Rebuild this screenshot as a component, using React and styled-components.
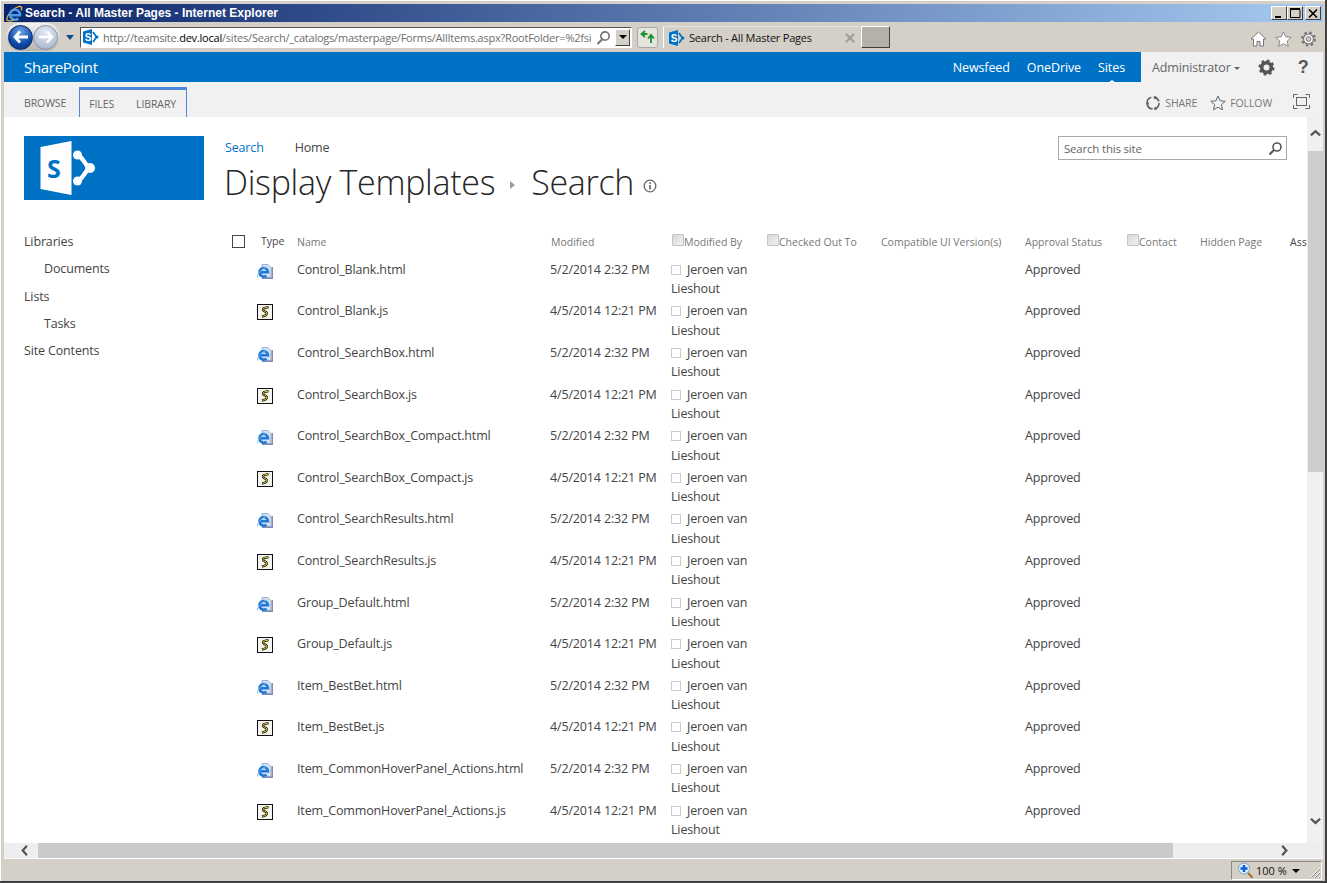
import React from "react";
import styled, { createGlobalStyle } from "styled-components";

const GlobalStyle = createGlobalStyle`
  html, body {
    margin: 0;
    padding: 0;
    width: 1327px;
    height: 883px;
    overflow: hidden;
    background: #d4d0c8;
  }
  * { box-sizing: border-box; }
`;

const UI_FONT = `"Open Sans", "Noto Sans", sans-serif`;

const names = [
  "Control_Blank",
  "Control_SearchBox",
  "Control_SearchBox_Compact",
  "Control_SearchResults",
  "Group_Default",
  "Item_BestBet",
  "Item_CommonHoverPanel_Actions",
];

const rows = names.flatMap((n) => [
  { name: n + ".html", html: true, date: "5/2/2014 2:32 PM" },
  { name: n + ".js", html: false, date: "4/5/2014 12:21 PM" },
]);

function IeLogo() {
  return (
    <svg width="17" height="17" viewBox="0 0 17 17">
      <path d="M1.500 16C-1 12.500 6 3.500 13 1.500c2.500-.6 3.500 1 2 4" fill="none" stroke="#e8b83c" strokeWidth="1.300" />
      <path d="M4.500 10.200H14A5 5 0 1 0 12.300 13.500" fill="none" stroke="#4a9cea" strokeWidth="2.500" />
      <path d="M2 15.500c1.500.8 4 .3 6-.5" fill="none" stroke="#e8b83c" strokeWidth="1.200" />
    </svg>
  );
}

function HtmlIcon() {
  return (
    <svg width="16" height="16" viewBox="0 0 16 16">
      <path d="M5 1.500h6l3 3v10H5z" fill="#d6e2f2" stroke="#9fb2d4" />
      <rect x="14.500" y="4" width="1.500" height="12" fill="#7d8cb0" />
      <rect x="5" y="14.500" width="11" height="1.500" fill="#7d8cb0" />
      <path d="M2.800 9.200H11A4.300 4.300 0 1 0 9.500 12.600" fill="none" stroke="#1f78d8" strokeWidth="2.500" />
      <path d="M.7 14.500C-.5 11.500 5 5.500 10 4" fill="none" stroke="#7cbcf2" />
    </svg>
  );
}

function ScriptIcon() {
  return (
    <svg width="16" height="16" viewBox="0 0 16 16">
      <rect x=".5" y=".5" width="15" height="15" fill="#f4f4f0" stroke="#111" />
      <path d="M11.500 3.200 7 4C5.200 4.700 6 6.500 7.500 7.200l1.500.8C10.500 9 9.800 11 8 11.600L5 12.600" fill="none" stroke="#111" strokeWidth="2.300" />
      <path d="M11 3.200 7 4C5.200 4.700 6 6.500 7.500 7.200l1.500.8C10.500 9 9.800 11 8 11.600L5.500 12.400" fill="none" stroke="#f2e21a" strokeWidth="0.900" />
    </svg>
  );
}

function SpFavicon() {
  return (
    <svg width="16" height="16" viewBox="0 0 16 16">
      <path d="M0 2.500 9 0v16L0 13.500z" fill="#0072c6" />
      <text x="1.800" y="11.500" fontFamily="Liberation Sans, sans-serif" fontWeight="700" fontSize="10" fill="#fff">S</text>
      <path d="M10 3l3.500 5L10 13" fill="none" stroke="#0072c6" strokeWidth="1.700" />
      <circle cx="14" cy="8" r="1.500" fill="#0072c6" />
    </svg>
  );
}

function Chevron({ dir }) {
  const d = {
    up: "M2 8l5-4.500L12 8",
    down: "M2 4l5 4.500L12 4",
    left: "M8.500 2L4 7l4.500 5",
    right: "M4.500 2L9 7l-4.500 5",
  }[dir];
  return (
    <svg width="13" height="13" viewBox="0 0 14 14">
      <path d={d} fill="none" stroke="#555" strokeWidth="2.400" />
    </svg>
  );
}

export default function App() {
  return (
    <Frame>
      <GlobalStyle />
      <TitleBar>
        <IeLogo />
        <TitleText>Search - All Master Pages - Internet Explorer</TitleText>
        <WinButtons>
          <WinButton>
            <svg width="10" height="10" viewBox="0 0 10 10"><path d="M1 9h6" stroke="#000" strokeWidth="2" /></svg>
          </WinButton>
          <WinButton>
            <svg width="11" height="10" viewBox="0 0 11 10"><path d="M.5 1.500h9.500v8h-9.500z" fill="none" stroke="#000" /><path d="M0 1h10" stroke="#000" strokeWidth="2" /></svg>
          </WinButton>
          <CloseButton>
            <svg width="10" height="9" viewBox="0 0 10 9"><path d="M1 .5l8 8M9 .5l-8 8" stroke="#000" strokeWidth="1.600" /></svg>
          </CloseButton>
        </WinButtons>
      </TitleBar>

      <NavBar>
        <BackForward>
          <NavCircle $active>
            <svg width="16" height="14" viewBox="0 0 16 14"><path d="M7 1.500 2 7l5 5.500M2.500 7H15" fill="none" stroke="#fff" strokeWidth="2.800" /></svg>
          </NavCircle>
          <NavCircle>
            <svg width="16" height="14" viewBox="0 0 16 14"><path d="M9 1.500 14 7l-5 5.500M13.500 7H1" fill="none" stroke="#fff" strokeWidth="2.600" /></svg>
          </NavCircle>
        </BackForward>
        <DropTriangle />
        <AddressBar>
          <SpFavicon />
          <UrlText>
            http://teamsite.<b>dev.local</b>/sites/Search/_catalogs/masterpage/Forms/AllItems.aspx?RootFolder=%2fsi
          </UrlText>
          <svg width="15" height="15" viewBox="0 0 15 15">
            <circle cx="9" cy="6" r="4.200" fill="none" stroke="#777" strokeWidth="1.700" />
            <path d="M6 9.500 1.500 14" stroke="#777" strokeWidth="2.200" />
          </svg>
          <AddressDrop><ArrowDown /></AddressDrop>
        </AddressBar>
        <RefreshButton>
          <svg width="16" height="14" viewBox="0 0 16 14">
            <path d="M7.500 4H3M5 1 1.500 4 5 7" fill="none" stroke="#1d8f2d" strokeWidth="1.800" />
            <path d="M11 13V6M8 8.500 11 5l3 3.500" fill="none" stroke="#1d8f2d" strokeWidth="1.800" />
          </svg>
        </RefreshButton>
        <BrowserTab>
          <SpFavicon />
          <TabLabel>Search - All Master Pages</TabLabel>
          <svg width="10" height="10" viewBox="0 0 10 10"><path d="M1 1l8 8M9 1l-8 8" stroke="#9a9a9a" strokeWidth="2" /></svg>
        </BrowserTab>
        <NewTab />
        <BrowserTools>
          <svg width="17" height="16" viewBox="0 0 17 16"><path d="M8.500 1 1 8h2.500v7h3.500v-4.500h3V15h3.500V8H16z" fill="#fff" stroke="#777" /></svg>
          <svg width="17" height="16" viewBox="0 0 17 16"><path d="M8.500.800l2.300 5 5.400.6-4 3.700 1.100 5.300-4.800-2.700-4.800 2.700 1.100-5.300-4-3.700 5.400-.6z" fill="#fff" stroke="#888" /></svg>
          <svg width="17" height="16" viewBox="0 0 16 16">
            <circle cx="8" cy="8" r="5" fill="#fff" stroke="#777" strokeWidth="1.200" />
            <circle cx="8" cy="8" r="6.300" fill="none" stroke="#777" strokeWidth="2.400" strokeDasharray="2.400 2.550" />
            <circle cx="8" cy="8" r="2.400" fill="#d4d0c8" stroke="#777" />
          </svg>
        </BrowserTools>
      </NavBar>

      <Viewport>
        <SuiteBar>
          <SuiteBlue>
            <Brand>SharePoint</Brand>
            <SuiteLinks>
              <SuiteLink>Newsfeed</SuiteLink>
              <SuiteLink>OneDrive</SuiteLink>
              <SuiteLink $current>Sites</SuiteLink>
            </SuiteLinks>
          </SuiteBlue>
          <SuiteUser>
            <UserName>Administrator</UserName>
            <UserCaret />
            <svg width="17" height="17" viewBox="0 0 16 16">
              <circle cx="8" cy="8" r="4.500" fill="none" stroke="#555" strokeWidth="3.400" />
              <circle cx="8" cy="8" r="6.300" fill="none" stroke="#555" strokeWidth="2.600" strokeDasharray="2.500 2.450" />
            </svg>
            <HelpMark>?</HelpMark>
          </SuiteUser>
        </SuiteBar>

        <Ribbon>
          <RibbonTab>BROWSE</RibbonTab>
          <RibbonGroup>
            <RibbonTab>FILES</RibbonTab>
            <RibbonTab>LIBRARY</RibbonTab>
          </RibbonGroup>
          <RibbonActions>
            <RibbonAction>
              <svg width="16" height="16" viewBox="0 0 16 16">
                <circle cx="8" cy="8" r="6" fill="none" stroke="#666" strokeWidth="1.700" strokeDasharray="7 2.400" />
                <circle cx="10.500" cy="2.800" r="1.500" fill="#666" />
                <circle cx="2.500" cy="8.500" r="1.500" fill="#666" />
                <circle cx="10.500" cy="13.500" r="1.500" fill="#666" />
              </svg>
              SHARE
            </RibbonAction>
            <RibbonAction $last>
              <svg width="16" height="16" viewBox="0 0 16 16"><path d="M8 1l2.100 4.800 5.100.5-3.800 3.400 1.100 5.100L8 12.200l-4.500 2.600 1.100-5.100L.8 6.300l5.100-.5z" fill="none" stroke="#666" /></svg>
              FOLLOW
            </RibbonAction>
            <FocusIcon width="17" height="15" viewBox="0 0 17 15">
              <path d="M.5 4V.5h4M12.500.5h4V4M16.500 11v3.500h-4M4.500 14.500h-4V11" fill="none" stroke="#666" />
              <rect x="3.500" y="3.500" width="10" height="8" fill="none" stroke="#666" />
            </FocusIcon>
          </RibbonActions>
        </Ribbon>

        <ContentArea>
          <Page>
            <LeftColumn>
              <SiteLogo>
                <svg width="60" height="56" viewBox="0 0 60 56">
                  <path d="M.500 7 31.500 1v54L.500 49z" fill="#fff" />
                  <text x="7" y="37.500" fontFamily="Open Sans, sans-serif" fontWeight="700" fontSize="25" fill="#0072c6">S</text>
                  <path d="M37 15c3 0 4 3 6 5s4 8 8 8c-4 0-6 6-8 8s-3 5-6 5" fill="none" stroke="#fff" strokeWidth="4.500" />
                  <circle cx="37.500" cy="15" r="4.500" fill="#fff" />
                  <circle cx="50" cy="28" r="5" fill="#fff" />
                  <circle cx="37.500" cy="41" r="4.500" fill="#fff" />
                </svg>
              </SiteLogo>
              <QuickLaunch>
                <NavItem>Libraries</NavItem>
                <NavItem $sub>Documents</NavItem>
                <NavItem>Lists</NavItem>
                <NavItem $sub>Tasks</NavItem>
                <NavItem>Site Contents</NavItem>
              </QuickLaunch>
            </LeftColumn>

            <MainColumn>
              <PageHeader>
                <div>
                  <TopNav>
                    <TopLink $current>Search</TopLink>
                    <TopLink>Home</TopLink>
                  </TopNav>
                  <PageTitle>
                    Display Templates
                    <TitleArrow />
                    Search
                    <svg width="14" height="14" viewBox="0 0 14 14">
                      <circle cx="7" cy="7" r="5.800" fill="none" stroke="#666" strokeWidth="1.300" />
                      <path d="M7 6v4.500M7 3.300v1.600" stroke="#666" strokeWidth="1.600" />
                    </svg>
                  </PageTitle>
                </div>
                <SearchBox>
                  <SearchPlaceholder>Search this site</SearchPlaceholder>
                  <svg width="15" height="15" viewBox="0 0 15 15">
                    <circle cx="9" cy="6" r="4" fill="none" stroke="#555" strokeWidth="1.600" />
                    <path d="M6 9 1.500 13.500" stroke="#555" strokeWidth="2" />
                  </svg>
                </SearchBox>
              </PageHeader>

              <ListTable>
                <HeaderRow>
                  <SelectAll />
                  <TypeHead>Type</TypeHead>
                  <HeadCell>Name</HeadCell>
                  <HeadCell>Modified</HeadCell>
                  <HeadCell><HeadCheck />Modified By</HeadCell>
                  <HeadCell><HeadCheck />Checked Out To</HeadCell>
                  <HeadCell>Compatible UI Version(s)</HeadCell>
                  <HeadCell>Approval Status</HeadCell>
                  <HeadCell><HeadCheck />Contact</HeadCell>
                  <HeadCell>Hidden Page</HeadCell>
                  <HeadCell $dark>Ass</HeadCell>
                </HeaderRow>
                {rows.map((r) => (
                  <Row key={r.name}>
                    <span />
                    <IconCell>{r.html ? <HtmlIcon /> : <ScriptIcon />}</IconCell>
                    <Cell>{r.name}</Cell>
                    <DateCell>{r.date}</DateCell>
                    <PersonCell><Presence />Jeroen van Lieshout</PersonCell>
                    <span />
                    <span />
                    <Cell>Approved</Cell>
                  </Row>
                ))}
              </ListTable>
            </MainColumn>
          </Page>
          <VScroll>
            <ScrollEnd $h={34} $align="flex-end"><Chevron dir="up" /></ScrollEnd>
            <VThumb />
            <VSpace />
            <ScrollEnd $h={28} $align="flex-start"><Chevron dir="down" /></ScrollEnd>
          </VScroll>
        </ContentArea>

        <HScroll>
          <HStart><Chevron dir="left" /></HStart>
          <HThumb />
          <HRest><Chevron dir="right" /></HRest>
        </HScroll>
      </Viewport>

      <StatusBar>
        <ZoomBox>
          <svg width="17" height="17" viewBox="0 0 17 17">
            <circle cx="7" cy="6.500" r="5.500" fill="#dcebfb" stroke="#8aa3c0" />
            <path d="M7 3v7M3.500 6.500h7" stroke="#0b5fd8" strokeWidth="2.400" />
            <path d="M11 11l4.500 4.500" stroke="#a0703a" strokeWidth="2.200" />
          </svg>
          <ZoomText>100 %</ZoomText>
          <ArrowDown />
          <Grip width="12" height="12" viewBox="0 0 12 12">
            <path d="M1 11 11 1M5 11l6-6M9 11l2-2" stroke="#fff" strokeWidth="1" />
            <path d="M2 11 11 2M6 11l5-5M10 11l1-1" stroke="#8a8880" strokeWidth="1" />
          </Grip>
        </ZoomBox>
      </StatusBar>
    </Frame>
  );
}

const Frame = styled.div`
  width: 1327px;
  height: 883px;
  display: flex;
  flex-direction: column;
  padding: 4px 2px 0 4px;
  background: #d4d0c8;
  border-bottom: 2px solid #404040;
  border-right: 2px solid #404040;
  box-shadow: inset 1px 1px 0 #fff;
  font-family: ${UI_FONT};
  overflow: hidden;
`;

const TitleBar = styled.div`
  height: 18px;
  flex: none;
  display: flex;
  align-items: center;
  gap: 2px;
  padding: 0 2px;
  background: linear-gradient(90deg, #0a246a, #a6caf0);
`;

const TitleText = styled.div`
  font-family: "Liberation Sans", sans-serif;
  font-size: 12px;
  font-weight: 700;
  color: #fff;
  white-space: nowrap;
`;

const WinButtons = styled.div`
  margin-left: auto;
  display: flex;
`;

const WinButton = styled.div`
  width: 16px;
  height: 14px;
  display: flex;
  align-items: center;
  justify-content: center;
  background: #d4d0c8;
  border: 1px solid;
  border-color: #fff #404040 #404040 #fff;
`;

const CloseButton = styled(WinButton)`
  margin-left: 2px;
`;

const NavBar = styled.div`
  height: 30px;
  flex: none;
  display: flex;
  align-items: center;
  background: #d4d0c8;
  padding-left: 2px;
`;

const BackForward = styled.div`
  width: 54px;
  height: 28px;
  display: flex;
  align-items: center;
  justify-content: space-between;
  padding: 0 2px;
  border-radius: 14px;
  background: linear-gradient(#f4f3f0, #b7b4ae);
`;

const NavCircle = styled.div`
  width: 25px;
  height: 25px;
  border-radius: 50%;
  display: flex;
  align-items: center;
  justify-content: center;
  background: ${(p) =>
    p.$active
      ? "radial-gradient(circle at 50% 25%, #6ea4e6, #0f4aa8 60%, #0a2f78)"
      : "radial-gradient(circle at 50% 25%, #e4e9f2, #b6c2d8 70%, #8e9ab0)"};
  border: 1px solid ${(p) => (p.$active ? "#0b2c6c" : "#8d96a8")};
`;

const DropTriangle = styled.div`
  width: 0;
  height: 0;
  margin-left: 6px;
  border-left: 4.500px solid transparent;
  border-right: 4.500px solid transparent;
  border-top: 5px solid #0f4f85;
`;

const AddressBar = styled.div`
  width: 552px;
  height: 21px;
  margin-left: 6px;
  display: flex;
  align-items: center;
  gap: 4px;
  padding: 0 1px 0 2px;
  background: #fff;
  border: 1px solid;
  border-color: #555 #fff #fff #555;
`;

const UrlText = styled.div`
  flex: 1;
  overflow: hidden;
  white-space: nowrap;
  font-size: 11px;
  letter-spacing: -0.220px;
  color: #6d6d6d;
  b {
    font-weight: 400;
    color: #000;
  }
`;

const AddressDrop = styled.div`
  width: 15px;
  height: 17px;
  display: flex;
  align-items: center;
  justify-content: center;
  background: #d4d0c8;
  border: 1px solid;
  border-color: #fff #404040 #404040 #fff;
`;

const ArrowDown = styled.span`
  display: block;
  flex: none;
  width: 0;
  height: 0;
  border-left: 4px solid transparent;
  border-right: 4px solid transparent;
  border-top: 4px solid #000;
`;

const RefreshButton = styled.div`
  width: 21px;
  height: 21px;
  margin-left: 5px;
  display: flex;
  align-items: center;
  justify-content: center;
  background: #e6e4e0;
  border: 1px solid #aaa9a5;
  border-radius: 3px;
`;

const BrowserTab = styled.div`
  width: 196px;
  height: 22px;
  margin-left: 5px;
  display: flex;
  align-items: center;
  padding: 0 4px 0 5px;
  border-left: 1px solid #fff;
  border-top: 1px solid #e6e3dd;
`;

const TabLabel = styled.div`
  flex: 1;
  margin-left: 4px;
  font-size: 11px;
  letter-spacing: -0.220px;
  color: #111;
  white-space: nowrap;
`;

const NewTab = styled.div`
  width: 29px;
  height: 22px;
  margin-left: 2px;
  background: #b5b1a9;
  border: 1px solid;
  border-color: #fff #404040 #404040 #fff;
`;

const BrowserTools = styled.div`
  margin-left: auto;
  padding-right: 6px;
  padding-top: 3px;
  display: flex;
  gap: 8px;
`;

const Viewport = styled.div`
  flex: none;
  height: 807px;
  width: 1319px;
  display: flex;
  flex-direction: column;
  background: #fff;
`;

const SuiteBar = styled.div`
  height: 30px;
  flex: none;
  display: flex;
`;

const SuiteBlue = styled.div`
  width: 1137px;
  display: flex;
  align-items: center;
  justify-content: space-between;
  padding: 0 16px 0 20px;
  background: #0072c6;
  color: #fff;
`;

const Brand = styled.div`
  font-size: 15px;
  letter-spacing: -0.300px;
`;

const SuiteLinks = styled.div`
  display: flex;
  gap: 17px;
`;

const SuiteLink = styled.div`
  position: relative;
  font-size: 12.500px;
  letter-spacing: -0.100px;
  &::after {
    content: "";
    display: ${(p) => (p.$current ? "block" : "none")};
    position: absolute;
    left: 50%;
    bottom: -7px;
    margin-left: -4px;
    border-left: 4px solid transparent;
    border-right: 4px solid transparent;
    border-bottom: 3px solid #fff;
  }
`;

const SuiteUser = styled.div`
  flex: 1;
  display: flex;
  align-items: center;
  padding-left: 11px;
  background: #f1f1f1;
  color: #666;
`;

const UserName = styled.div`
  font-size: 12.500px;
  letter-spacing: -0.150px;
`;

const UserCaret = styled.span`
  margin: 2px 18px 0 3px;
  border-left: 3.500px solid transparent;
  border-right: 3.500px solid transparent;
  border-top: 3.500px solid #666;
`;

const HelpMark = styled.div`
  margin-left: 23px;
  font-family: "Liberation Sans", sans-serif;
  font-size: 18px;
  font-weight: 700;
  color: #555;
`;

const Ribbon = styled.div`
  height: 35px;
  flex: none;
  display: flex;
  align-items: flex-end;
  padding: 0 13px 0 20px;
  background: #f1f1f1;
`;

const RibbonTab = styled.div`
  height: 30px;
  padding-top: 9px;
  font-size: 10.500px;
  letter-spacing: -0.100px;
  color: #666;
`;

const RibbonGroup = styled.div`
  height: 30px;
  margin-left: 13px;
  display: flex;
  gap: 22px;
  padding: 0 10px 0 9px;
  border: 1px solid #4d88dd;
  border-top: 3px solid #4d88dd;
  border-bottom: none;
  ${RibbonTab} {
    height: 27px;
    padding-top: 7px;
  }
`;

const RibbonActions = styled.div`
  margin-left: auto;
  height: 100%;
  padding-top: 6px;
  display: flex;
  align-items: center;
  font-size: 10.500px;
  color: #777;
`;

const RibbonAction = styled.div`
  display: flex;
  align-items: center;
  gap: 4px;
  margin-right: ${(p) => (p.$last ? "21px" : "13px")};
  letter-spacing: -0.100px;
`;

const FocusIcon = styled.svg`
  margin-top: -2px;
`;

const ContentArea = styled.div`
  height: 726px;
  flex: none;
  display: flex;
`;

const Page = styled.div`
  flex: 1;
  min-width: 0;
  display: flex;
  overflow: hidden;
`;

const LeftColumn = styled.div`
  width: 221px;
  flex: none;
  padding: 19px 0 0 20px;
`;

const SiteLogo = styled.div`
  width: 180px;
  height: 64px;
  display: flex;
  align-items: center;
  padding-left: 16px;
  background: #0072c6;
`;

const QuickLaunch = styled.div`
  margin-top: 28px;
`;

const NavItem = styled.div`
  height: 27.300px;
  line-height: 27px;
  padding-left: ${(p) => (p.$sub ? "20px" : "0")};
  font-size: 12.500px;
  letter-spacing: -0.150px;
  color: #444;
`;

const MainColumn = styled.div`
  flex: 1;
  min-width: 0;
  padding-top: 19px;
  overflow: hidden;
`;

const PageHeader = styled.div`
  height: 95px;
  display: flex;
  justify-content: space-between;
  padding-right: 20px;
`;

const TopNav = styled.div`
  height: 22px;
  display: flex;
  align-items: center;
  gap: 31px;
`;

const TopLink = styled.div`
  font-size: 12.500px;
  letter-spacing: -0.150px;
  color: ${(p) => (p.$current ? "#0072c6" : "#444")};
`;

const PageTitle = styled.div`
  height: 50px;
  margin: -1px 0 0 -1px;
  display: flex;
  align-items: center;
  font-size: 34px;
  font-weight: 300;
  letter-spacing: -0.300px;
  color: #262626;
  white-space: nowrap;
  svg {
    margin: 8px 0 0 9px;
  }
`;

const TitleArrow = styled.span`
  margin: 6px 16px 0 15px;
  border-top: 4px solid transparent;
  border-bottom: 4px solid transparent;
  border-left: 5px solid #9a9a9a;
`;

const SearchBox = styled.div`
  width: 229px;
  height: 24px;
  display: flex;
  align-items: center;
  justify-content: space-between;
  padding: 0 3px 0 5px;
  border: 1px solid #ababab;
`;

const SearchPlaceholder = styled.div`
  font-size: 11.500px;
  letter-spacing: -0.200px;
  color: #666;
`;

const ListTable = styled.div`
  width: 1200px;
  padding-left: 7px;
`;

const columns = "29px 36px 254px 121px 95px 114px 144px 102px 73px 90px 20px";

const HeaderRow = styled.div`
  height: 28.900px;
  display: grid;
  grid-template-columns: ${columns};
  align-items: center;
  padding-bottom: 7px;
`;

const SelectAll = styled.div`
  width: 13px;
  height: 13px;
  margin-top: -1px;
  border: 1px solid #444;
`;

const HeadCell = styled.div`
  display: flex;
  align-items: center;
  font-size: 10.500px;
  color: ${(p) => (p.$dark ? "#444" : "#777")};
  white-space: nowrap;
`;

const TypeHead = styled(HeadCell)`
  color: #444;
  margin-top: -2px;
`;

const HeadCheck = styled.span`
  width: 12px;
  height: 12px;
  margin-top: -4px;
  border: 1px solid #c4c4c4;
  border-radius: 1px;
  background: linear-gradient(135deg, #d8d8d8, #f2f2f2);
`;

const Row = styled.div`
  height: 41.600px;
  display: grid;
  grid-template-columns: ${columns};
  align-items: start;
`;

const Cell = styled.div`
  font-size: 12.500px;
  line-height: 19.300px;
  letter-spacing: -0.150px;
  color: #444;
  white-space: nowrap;
`;

const DateCell = styled(Cell)`
  margin-left: -1px;
`;

const IconCell = styled.div`
  margin-left: -4px;
  height: 19px;
  display: flex;
  align-items: flex-end;
`;

const PersonCell = styled(Cell)`
  margin-left: -1px;
  white-space: normal;
`;

const Presence = styled.span`
  display: inline-block;
  width: 10px;
  height: 10px;
  margin-right: 6px;
  vertical-align: -1px;
  border: 1px solid #ccc;
`;

const VScroll = styled.div`
  width: 16px;
  flex: none;
  display: flex;
  flex-direction: column;
  background: #f0f0f0;
`;

const ScrollEnd = styled.div`
  height: ${(p) => p.$h}px;
  flex: none;
  display: flex;
  justify-content: center;
  align-items: ${(p) => p.$align};
  padding: 0 0 10px 0;
`;

const VThumb = styled.div`
  height: 321px;
  flex: none;
  margin-left: 1px;
  background: #cdcdcd;
`;

const VSpace = styled.div`
  flex: 1;
`;

const HScroll = styled.div`
  height: 16px;
  flex: none;
  display: flex;
  background: #eeeeee;
  border-bottom: 1px solid #fff;
`;

const HStart = styled.div`
  width: 34px;
  display: flex;
  align-items: center;
  justify-content: flex-end;
  padding-right: 6px;
`;

const HThumb = styled.div`
  width: 1135px;
  background: #cacaca;
`;

const HRest = styled.div`
  flex: 1;
  display: flex;
  align-items: center;
  justify-content: flex-end;
  padding-right: 32px;
`;

const StatusBar = styled.div`
  flex: 1;
  display: flex;
  justify-content: flex-end;
  padding: 2px 1px 2px 0;
  background: #d4d0c8;
`;

const ZoomBox = styled.div`
  width: 91px;
  display: flex;
  align-items: center;
  padding: 0 0 0 5px;
  border: 1px solid;
  border-color: #8a8880 #fff #fff #8a8880;
`;

const ZoomText = styled.div`
  flex: 1;
  margin-left: 2px;
  font-size: 11px;
  color: #111;
`;

const Grip = styled.svg`
  align-self: flex-end;
  margin-left: 9px;
`;
